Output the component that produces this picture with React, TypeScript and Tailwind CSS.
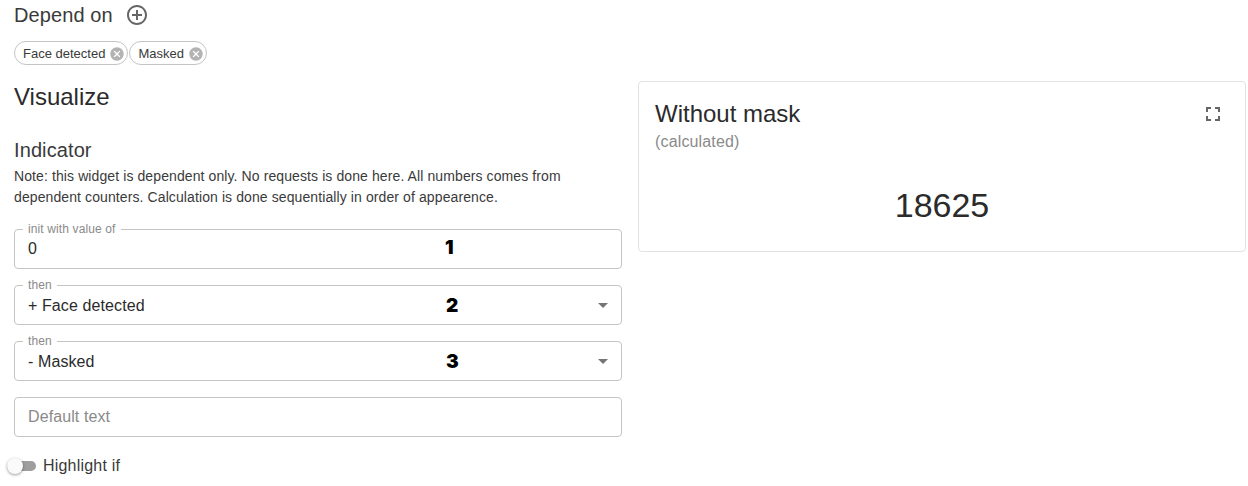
import { useState } from "react";

const font = { fontFamily: '"Liberation Sans", Arial, sans-serif' };

function Chip({ label }: { label: string }) {
  return (
    <span className="flex h-6 items-center rounded-full border border-[#c4c4c4] bg-white pl-2 pr-[2px] pt-px text-[13px] text-[#3a3a3a]">
      {label}
      <svg viewBox="0 0 24 24" className="ml-1 h-4 w-4 fill-[#b3b3b3]">
        <path d="M12 2C6.47 2 2 6.47 2 12s4.47 10 10 10 10-4.47 10-10S17.53 2 12 2zm5 13.59L15.59 17 12 13.41 8.41 17 7 15.59 10.59 12 7 8.41 8.41 7 12 10.59 15.59 7 17 8.41 13.41 12 17 15.59z" />
      </svg>
    </span>
  );
}

function Field({
  label,
  value,
  marker,
  select,
}: {
  label?: string;
  value: string;
  marker?: string;
  select?: boolean;
}) {
  return (
    <div className="relative flex h-10 items-center rounded border border-[#c4c4c4] pl-[13px] pr-[13px] text-base text-[#2b2b2b]">
      {label && (
        <span className="absolute -top-[8px] left-[8px] bg-white px-[5px] text-xs leading-[14px] tracking-[0.12px] text-[#8a8a8a]">
          {label}
        </span>
      )}
      <span className={select ? "flex-1 pt-px tracking-[0.1px]" : "flex-1 tracking-[0.1px]"}>{value}</span>
      {marker && (
        <span
          className={
            select
              ? "absolute left-[431px] top-[8px] font-['Inter'] text-[19px] font-black leading-[24px] text-black"
              : "absolute left-[430px] top-[6px] font-['Inter'] text-[19px] font-black leading-[24px] text-black"
          }
        >
          {marker}
        </span>
      )}
      {select && (
        <svg viewBox="0 0 10 5" className="h-[5px] w-[10px] fill-[#757575]">
          <path d="M0 0h10L5 5z" />
        </svg>
      )}
    </div>
  );
}

export default function App() {
  const [highlight, setHighlight] = useState(false);

  return (
    <div className="h-[486px] w-[1248px] overflow-hidden bg-white pl-[14px] pr-[2px]" style={font}>
      <div className="flex h-[30px] items-center gap-[12px] text-xl tracking-[0.1px] text-[#3a3a3a]">
        Depend on
        <svg viewBox="0 0 24 24" className="h-6 w-6 fill-[#666]">
          <path d="M13 7h-2v4H7v2h4v4h2v-4h4v-2h-4V7zm-1-5C6.48 2 2 6.48 2 12s4.48 10 10 10 10-4.48 10-10S17.52 2 12 2zm0 18c-4.41 0-8-3.59-8-8s3.59-8 8-8 8 3.59 8 8-3.59 8-8 8z" />
        </svg>
      </div>

      <div className="mt-[11px] flex gap-px">
        <Chip label="Face detected" />
        <Chip label="Masked" />
      </div>

      <div className="mt-4 flex items-start gap-4">
        <div className="w-[608px]">
          <h2 className="text-2xl leading-8 text-[#2b2b2b]">Visualize</h2>
          <h3 className="mt-[23px] text-xl leading-7 tracking-[0.1px] text-[#3a3a3a]">Indicator</h3>
          <p className="mt-[2px] text-sm leading-[21px] tracking-[0.1px] text-[#3a3a3a]">
            Note: this widget is dependent only. No requests is done here. All numbers comes from
            <br />
            dependent counters. Calculation is done sequentially in order of appearence.
          </p>

          <div className="mt-[21px] flex flex-col gap-4">
            <Field label="init with value of" value="0" marker="1" />
            <Field label="then" value="+ Face detected" marker="2" select />
            <Field label="then" value="- Masked" marker="3" select />
            <input
              placeholder="Default text"
              className="h-10 rounded border border-[#c4c4c4] px-[13px] text-base tracking-[0.1px] outline-none placeholder:text-[#8a8a8a]"
            />
          </div>

          <label className="mt-[19px] -ml-[7px] flex h-5 cursor-pointer items-center text-base tracking-[0.2px] text-[#3a3a3a]">
            <button
              type="button"
              onClick={() => setHighlight(!highlight)}
              className="relative mr-[7px] h-[10px] w-[29px] rounded-full bg-[#9e9e9e]"
            >
              <span className="absolute -top-[3px] left-0 h-4 w-4 rounded-full bg-[#fafafa] shadow-[0_1px_3px_rgba(0,0,0,0.4)]" />
            </button>
            Highlight if
          </label>
        </div>

        <div className="relative h-[171px] w-[608px] rounded border border-[#e2e2e2] bg-white px-4 pt-4">
          <div className="text-2xl leading-8 text-[#2b2b2b]">Without mask</div>
          <div className="mt-[2px] text-base leading-5 tracking-[0.15px] text-[#8a8a8a]">(calculated)</div>
          <div className="mt-[33px] text-center text-[34px] leading-10 text-[#2b2b2b]">18625</div>
          <svg viewBox="0 0 24 24" className="absolute right-[20px] top-[20px] h-6 w-6 fill-[#666]">
            <path d="M7 14H5v5h5v-2H7v-3zm-2-4h2V7h3V5H5v5zm12 7h-3v2h5v-5h-2v3zM14 7h3v3h2V5h-5v2z" />
          </svg>
        </div>
      </div>
    </div>
  );
}
